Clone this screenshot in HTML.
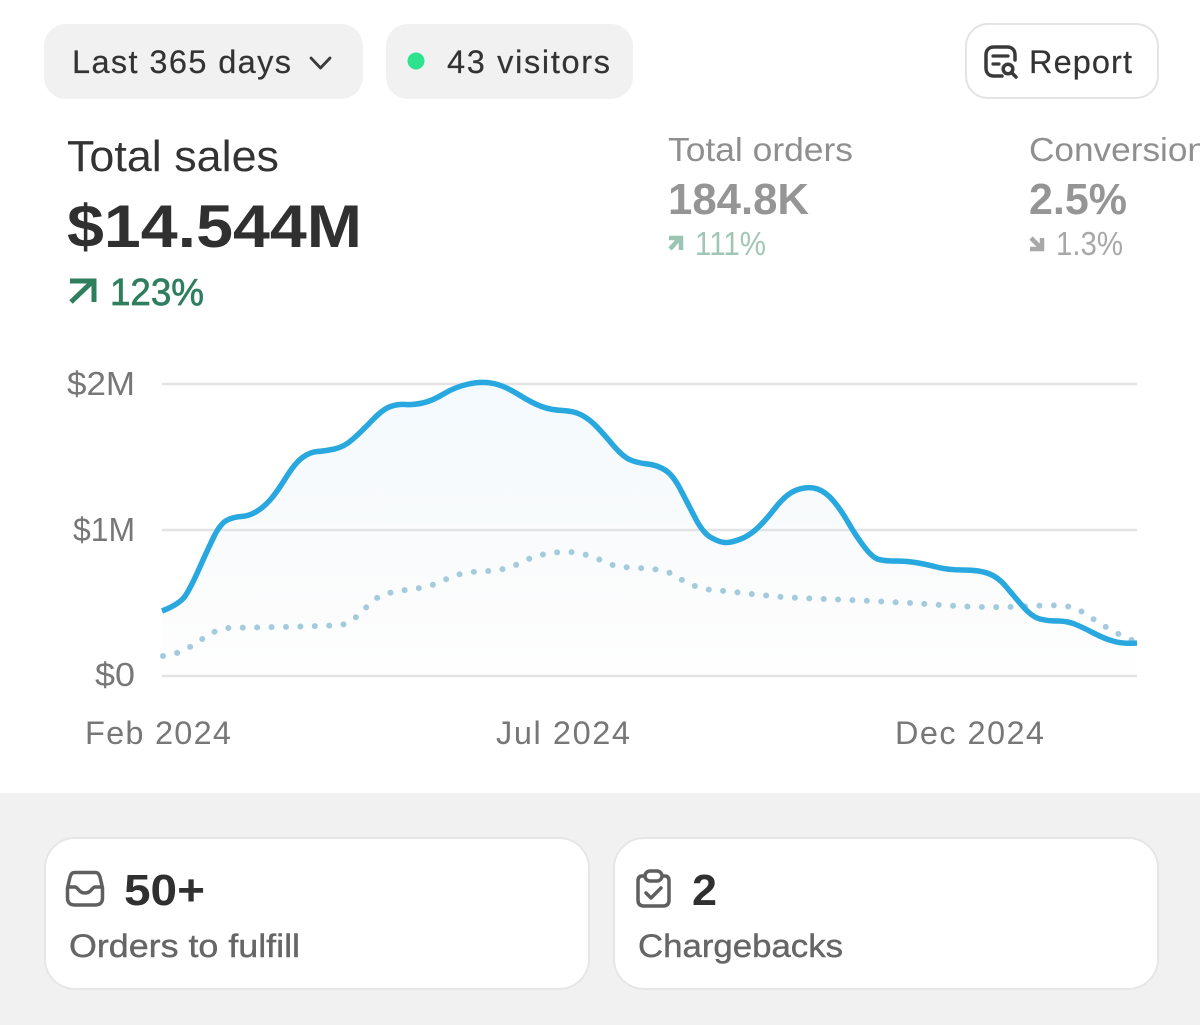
<!DOCTYPE html>
<html lang="en">
<head>
<meta charset="utf-8">
<title>Sales dashboard</title>
<style>
html,body{margin:0;padding:0;background:#fff;width:1200px;height:1025px;overflow:hidden}
svg{display:block}
text{font-family:"Liberation Sans",Arial,sans-serif}
</style>
</head>
<body>
<svg width="1200" height="1025" viewBox="0 0 1200 1025" xmlns="http://www.w3.org/2000/svg">
<defs>
<linearGradient id="f" x1="0" y1="383" x2="0" y2="676" gradientUnits="userSpaceOnUse">
<stop offset="0" stop-color="#f3fafd"/>
<stop offset="0.6" stop-color="#fafbfc"/>
<stop offset="1" stop-color="#fefefe"/>
</linearGradient>
</defs>
<rect width="1200" height="1025" fill="#fff"/>

<!-- top controls -->
<rect x="44" y="24" width="319" height="75" rx="22" fill="#f1f1f1"/>
<text x="72" y="73" font-size="32.500" fill="#333" stroke="#333" stroke-width="0.200" textLength="219">Last 365 days</text>
<path d="M311 58L320.500 68L330 58" fill="none" stroke="#3a3a3a" stroke-width="2.800" stroke-linecap="round" stroke-linejoin="round"/>

<rect x="386" y="24" width="247" height="75" rx="22" fill="#f1f1f1"/>
<circle cx="416" cy="61" r="8.500" fill="#2fe28e"/>
<text x="447" y="73" font-size="32.500" fill="#333" stroke="#333" stroke-width="0.200" textLength="163">43 visitors</text>

<rect x="966" y="24" width="192" height="74" rx="22" fill="#fff" stroke="#e4e4e4" stroke-width="2"/>
<path d="M1002 76H994C989 76 986 73 986 68V55C986 50 989 47 994 47H1007C1012 47 1015 50 1015 55V60" fill="none" stroke="#3a3a3a" stroke-width="3.500" stroke-linecap="round"/>
<path d="M993 56H1008M993 64H999" fill="none" stroke="#3a3a3a" stroke-width="3.200" stroke-linecap="round"/>
<circle cx="1008" cy="69" r="4.800" fill="none" stroke="#3a3a3a" stroke-width="3.500"/>
<path d="M1012 73L1016 77" fill="none" stroke="#3a3a3a" stroke-width="3.500" stroke-linecap="round"/>
<text x="1029" y="73" font-size="32.500" fill="#333" stroke="#333" stroke-width="0.200" textLength="103">Report</text>

<!-- primary metric -->
<text x="67" y="171" font-size="44" fill="#333" textLength="212" lengthAdjust="spacingAndGlyphs">Total sales</text>
<text x="67" y="247" font-size="60" font-weight="700" fill="#303030" textLength="295" lengthAdjust="spacingAndGlyphs">$14.544M</text>
<path d="M71 302L93 281M70 281H94V302" fill="none" stroke="#2f7f5f" stroke-width="5"/>
<text x="110" y="305" font-size="38" fill="#2f7f5f" stroke="#2f7f5f" stroke-width="0.700" textLength="94" lengthAdjust="spacingAndGlyphs">123%</text>

<!-- secondary metrics -->
<text x="668" y="161" font-size="33" fill="#8f8f8f" textLength="185" lengthAdjust="spacingAndGlyphs">Total orders</text>
<text x="668" y="214" font-size="44" font-weight="700" fill="#959595" textLength="141" lengthAdjust="spacingAndGlyphs">184.8K</text>
<path d="M670 249L680 238M669 238H681V250" fill="none" stroke="#9cc4b2" stroke-width="4.500"/>
<text x="695" y="255" font-size="33" fill="#a0c6b6" textLength="71" lengthAdjust="spacingAndGlyphs">111%</text>

<text x="1029" y="161" font-size="33" fill="#8f8f8f" textLength="178" lengthAdjust="spacingAndGlyphs">Conversion</text>
<text x="1029" y="214" font-size="44" font-weight="700" fill="#959595" textLength="98" lengthAdjust="spacingAndGlyphs">2.5%</text>
<path d="M1031 238L1041 248M1030 249H1042V238" fill="none" stroke="#a8a8a8" stroke-width="4.500"/>
<text x="1056" y="255" font-size="33" fill="#a8a8a8" textLength="67" lengthAdjust="spacingAndGlyphs">1.3%</text>

<!-- chart -->
<path fill="url(#f)" d="M162 611Q180 604 185.500 595.500Q191 587 199 569Q207 551 213.500 537.500Q220 524 226.500 520.500Q233 517 241 516.500Q249 516 256.500 511.500Q264 507 270.500 499.500Q277 492 286 477.500Q295 463 302.500 457.500Q310 452 317.500 451.500Q325 451 334.500 449Q344 447 353 439Q362 431 372.500 420Q383 409 390.500 406.500Q398 404 405.500 404.500Q413 405 422.500 403Q432 401 443.500 394Q455 387 468.500 384Q482 381 493.500 383.500Q505 386 518.500 394.500Q532 403 541.500 406.500Q551 410 562.500 410.500Q574 411 581.500 415Q589 419 595.500 425.500Q602 432 612.500 444.500Q623 457 630.500 460Q638 463 647.500 464Q657 465 665 470Q673 475 680.500 489.500Q688 504 695.500 518.500Q703 533 711 537.500Q719 542 724.500 542.500Q730 543 739.500 539.500Q749 536 757 528.500Q765 521 776 507Q787 493 798 489.500Q809 486 817.500 489Q826 492 833.500 501Q841 510 848.500 523Q856 536 864 546.500Q872 557 877.500 559Q883 561 894.500 561Q906 561 915.500 562.500Q925 564 936.500 567Q948 570 963.500 570Q979 570 988.500 573.500Q998 577 1005.500 586Q1013 595 1022.500 606Q1032 617 1040 619Q1048 621 1057.500 621Q1067 621 1074.500 624Q1082 627 1093.500 633Q1105 639 1114.500 641.500Q1124 644 1137 643V676H162Z"/>
<path d="M162 384H1137M162 530H1137M162 676H1137" stroke="#e3e3e3" stroke-width="2.500" fill="none"/>
<path fill="none" stroke="#a3cbdd" stroke-width="6" stroke-linecap="round" stroke-dasharray="0 14.400" d="M163 656C175 654 182 652 190 647C205 638 215 628 230 628C260 627 310 627 340 625C355 624 365 605 380 596C395 590 410 590 425 587C440 584 450 575 470 572C490 571 505 571 520 563C535 555 550 552 567 552C585 552 600 560 615 566C635 569 660 567 672 574C685 582 695 588 712 590C740 592 770 597 800 598C850 600 900 602 940 605C970 607 1000 608 1030 606C1050 605 1065 605 1075 608C1090 615 1105 630 1137 642"/>
<path fill="none" stroke="#28a8df" stroke-width="5.500" d="M162 611Q180 604 185.500 595.500Q191 587 199 569Q207 551 213.500 537.500Q220 524 226.500 520.500Q233 517 241 516.500Q249 516 256.500 511.500Q264 507 270.500 499.500Q277 492 286 477.500Q295 463 302.500 457.500Q310 452 317.500 451.500Q325 451 334.500 449Q344 447 353 439Q362 431 372.500 420Q383 409 390.500 406.500Q398 404 405.500 404.500Q413 405 422.500 403Q432 401 443.500 394Q455 387 468.500 384Q482 381 493.500 383.500Q505 386 518.500 394.500Q532 403 541.500 406.500Q551 410 562.500 410.500Q574 411 581.500 415Q589 419 595.500 425.500Q602 432 612.500 444.500Q623 457 630.500 460Q638 463 647.500 464Q657 465 665 470Q673 475 680.500 489.500Q688 504 695.500 518.500Q703 533 711 537.500Q719 542 724.500 542.500Q730 543 739.500 539.500Q749 536 757 528.500Q765 521 776 507Q787 493 798 489.500Q809 486 817.500 489Q826 492 833.500 501Q841 510 848.500 523Q856 536 864 546.500Q872 557 877.500 559Q883 561 894.500 561Q906 561 915.500 562.500Q925 564 936.500 567Q948 570 963.500 570Q979 570 988.500 573.500Q998 577 1005.500 586Q1013 595 1022.500 606Q1032 617 1040 619Q1048 621 1057.500 621Q1067 621 1074.500 624Q1082 627 1093.500 633Q1105 639 1114.500 641.500Q1124 644 1137 643"/>

<text x="67" y="395" font-size="33" fill="#777" textLength="68" lengthAdjust="spacingAndGlyphs">$2M</text>
<text x="73" y="541" font-size="33" fill="#777" textLength="62" lengthAdjust="spacingAndGlyphs">$1M</text>
<text x="95" y="686" font-size="33" fill="#777" textLength="40" lengthAdjust="spacingAndGlyphs">$0</text>
<text x="85" y="744" font-size="32.500" fill="#777" textLength="146">Feb 2024</text>
<text x="496" y="744" font-size="32.500" fill="#777" textLength="134">Jul 2024</text>
<text x="895" y="744" font-size="32.500" fill="#777" textLength="149">Dec 2024</text>

<!-- bottom band -->
<rect x="0" y="793" width="1200" height="232" fill="#f1f1f1"/>
<rect x="45" y="838" width="544" height="151" rx="30" fill="#fff" stroke="#e6e6e6" stroke-width="2"/>
<rect x="614" y="838" width="544" height="151" rx="30" fill="#fff" stroke="#e6e6e6" stroke-width="2"/>

<!-- inbox icon -->
<path d="M75 872.500H95C98 872.500 99 874 100 877L102.500 888V898C102.500 902.500 100 905 95.500 905H74.500C70 905 67.500 902.500 67.500 898V888L70 877C71 874 72 872.500 75 872.500Z" fill="none" stroke="#5f5f5f" stroke-width="3.500" stroke-linejoin="round"/>
<path d="M68 887H75C78 887 78.500 893 85 893C91.500 893 92 887 95 887H102" fill="none" stroke="#5f5f5f" stroke-width="3.500" stroke-linejoin="round"/>
<text x="124" y="905" font-size="44" font-weight="700" fill="#303030" textLength="81" lengthAdjust="spacingAndGlyphs">50+</text>
<text x="69" y="957" font-size="32" fill="#666" stroke="#666" stroke-width="0.400" textLength="231" lengthAdjust="spacingAndGlyphs">Orders to fulfill</text>

<!-- clipboard icon -->
<path d="M644 876H642C639 876 638 878 638 881V900C638 904 640 906 644 906H663C667 906 669 904 669 900V881C669 878 668 876 665 876H663" fill="none" stroke="#5f5f5f" stroke-width="3.500"/>
<rect x="645" y="871" width="17" height="10" rx="5" fill="#fff" stroke="#5f5f5f" stroke-width="3.500"/>
<path d="M646 893L651 898L661 888" fill="none" stroke="#5f5f5f" stroke-width="3.500" stroke-linecap="round" stroke-linejoin="round"/>
<text x="692" y="905" font-size="44" font-weight="700" fill="#303030" textLength="25" lengthAdjust="spacingAndGlyphs">2</text>
<text x="638" y="957" font-size="32" fill="#666" stroke="#666" stroke-width="0.400" textLength="205" lengthAdjust="spacingAndGlyphs">Chargebacks</text>
</svg>
</body>
</html>
